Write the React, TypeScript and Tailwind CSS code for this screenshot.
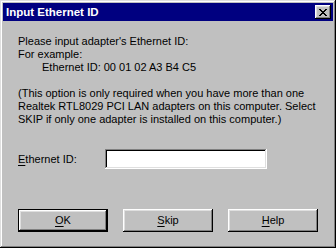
import React from "react";

const raised =
  "shadow-[inset_-1px_-1px_#000000,inset_1px_1px_#ffffff,inset_-2px_-2px_#808080,inset_2px_2px_#dfdfdf]";

function CloseGlyph() {
  const rows = [
    "XX....XX",
    ".XX..XX.",
    "..XXXX..",
    "...XX...",
    "..XXXX..",
    ".XX..XX.",
    "XX....XX",
  ];
  const rects: React.ReactElement[] = [];
  rows.forEach((r, y) =>
    r.split("").forEach((c, x) => {
      if (c === "X") rects.push(<rect key={`${x}-${y}`} x={x} y={y} width={1} height={1} fill="#000" />);
    })
  );
  return (
    <svg width="8" height="7" viewBox="0 0 8 7" shapeRendering="crispEdges">
      {rects}
    </svg>
  );
}

function Btn({ children, def }: { children: React.ReactNode; def?: boolean }) {
  return (
    <button
      className={
        def
          ? `w-[90px] h-[23px] border border-black bg-[#c0c0c0] flex items-center justify-center text-[11px] text-black ${raised}`
          : `w-[90px] h-[23px] bg-[#c0c0c0] flex items-center justify-center text-[11px] text-black ${raised}`
      }
    >
      {children}
    </button>
  );
}

export default function App() {
  return (
    <div className="w-[336px] h-[248px] bg-[#c0c0c0] p-[3px] flex flex-col font-['Liberation_Sans',Arial,sans-serif] text-black shadow-[inset_-1px_-1px_#000000,inset_1px_1px_#dfdfdf,inset_-2px_-2px_#808080,inset_2px_2px_#ffffff]">
      <div className="h-[18px] bg-[#000080] flex items-center justify-between pl-[3px] pr-[2px]">
        <span className="text-white font-bold text-[11.5px] leading-[13px]">Input Ethernet ID</span>
        <div className={`w-[16px] h-[14px] bg-[#c0c0c0] flex items-center justify-center ${raised}`}>
          <CloseGlyph />
        </div>
      </div>
      <div className="flex flex-col pl-[15px] pt-[14px] text-[11px] leading-[13px]">
        <div>Please input adapter's Ethernet ID:</div>
        <div>For example:</div>
        <div className="pl-[24px]">Ethernet ID: 00 01 02 A3 B4 C5</div>
        <div className="h-[13px]" />
        <div>(This option is only required when you have more than one</div>
        <div>Realtek RTL8029 PCI LAN adapters on this computer. Select</div>
        <div>SKIP if only one adapter is installed on this computer.)</div>
        <div className="flex items-center mt-[23px] h-[20px]">
          <span className="w-[87px]">
            <span className="underline underline-offset-[2px]">E</span>thernet ID:
          </span>
          <div className="w-[162px] h-[20px] bg-white shadow-[inset_-1px_-1px_#ffffff,inset_1px_1px_#808080,inset_-2px_-2px_#dfdfdf,inset_2px_2px_#000000]" />
        </div>
        <div className="flex gap-[15px] mt-[40px]">
          <Btn def>
            <span className="underline underline-offset-[2px]">O</span>K
          </Btn>
          <Btn>
            <span className="underline underline-offset-[2px]">S</span>kip
          </Btn>
          <Btn>
            <span className="underline underline-offset-[2px]">H</span>elp
          </Btn>
        </div>
      </div>
    </div>
  );
}
